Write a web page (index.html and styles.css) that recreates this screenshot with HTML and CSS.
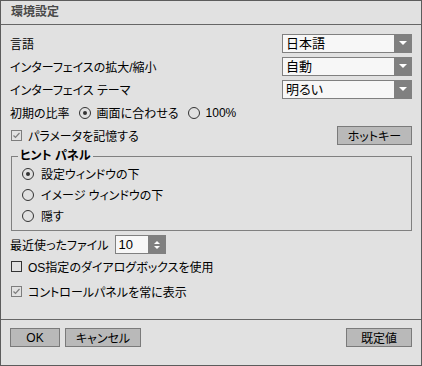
FILE: index.html
```html
<!DOCTYPE html>
<html lang="ja">
<head>
    <meta charset="UTF-8">
    <title>環境設定</title>
    <link rel="stylesheet" href="styles.css">
</head>
<body>
    <div class="window">
        <div class="titlebar">環境設定</div>

        <div class="content">
            <div class="row">
                <span>言語</span>
                <div class="select">
                    <span class="select-value">日本語</span>
                    <span class="select-arrow"><svg width="8" height="5" viewBox="0 0 8 5"><polygon points="0,0 8,0 4,4" fill="#fff"/></svg></span>
                </div>
            </div>

            <div class="row">
                <span>インターフェイスの拡大/縮小</span>
                <div class="select">
                    <span class="select-value">自動</span>
                    <span class="select-arrow"><svg width="8" height="5" viewBox="0 0 8 5"><polygon points="0,0 8,0 4,4" fill="#fff"/></svg></span>
                </div>
            </div>

            <div class="row">
                <span>インターフェイス テーマ</span>
                <div class="select">
                    <span class="select-value">明るい</span>
                    <span class="select-arrow"><svg width="8" height="5" viewBox="0 0 8 5"><polygon points="0,0 8,0 4,4" fill="#fff"/></svg></span>
                </div>
            </div>

            <div class="row ratio">
                <span>初期の比率</span>
                <span class="radio checked"></span>
                <span>画面に合わせる</span>
                <span class="radio"></span>
                <span>100%</span>
            </div>

            <div class="row">
                <span class="check">
                    <span class="box checked"><svg width="9" height="9" viewBox="0 0 9 9"><polyline points="1.5,4.5 3.5,6.5 7.5,2" fill="none" stroke="#7d7d7d" stroke-width="1.2"/></svg></span>
                    パラメータを記憶する
                </span>
                <span class="btn hotkey">ホットキー</span>
            </div>

            <fieldset class="hint">
                <legend>ヒント パネル</legend>
                <div class="opt"><span class="radio checked"></span>設定ウィンドウの下</div>
                <div class="opt"><span class="radio"></span>イメージ ウィンドウの下</div>
                <div class="opt"><span class="radio"></span>隠す</div>
            </fieldset>

            <div class="row recent">
                <span>最近使ったファイル</span>
                <div class="spin">
                    <span class="spin-value">10</span>
                    <span class="spin-arrows"><svg width="6" height="10" viewBox="0 0 6 10"><polygon points="0,4 6,4 3,1" fill="#fff"/><polygon points="0,6 6,6 3,9" fill="#fff"/></svg></span>
                </div>
            </div>

            <div class="row os">
                <span class="check"><span class="box"></span>OS指定のダイアログボックスを使用</span>
            </div>

            <div class="row panel">
                <span class="check">
                    <span class="box checked"><svg width="9" height="9" viewBox="0 0 9 9"><polyline points="1.5,4.5 3.5,6.5 7.5,2" fill="none" stroke="#7d7d7d" stroke-width="1.2"/></svg></span>
                    コントロールパネルを常に表示
                </span>
            </div>
        </div>

        <div class="footer">
            <span class="btn ok">OK</span>
            <span class="btn cancel">キャンセル</span>
            <span class="btn default">既定値</span>
        </div>
    </div>
</body>
</html>
```

FILE: styles.css
```css
body {
    margin: 0;
    font-family: "Liberation Sans", "Noto Sans CJK JP", sans-serif;
    font-size: 12px;
    color: #000;
    background: #e1e1e1;
}

.window {
    width: 422px;
    height: 366px;
    box-sizing: border-box;
    border: 1px solid #5c5c5c;
    background: #e1e1e1;
    display: flex;
    flex-direction: column;
    font-feature-settings: "palt" 1;
}

.titlebar {
    height: 23px;
    line-height: 23px;
    padding-left: 10px;
    border-bottom: 1px solid #666;
    font-weight: bold;
    font-size: 12px;
    color: #4a4a4a;
}

.content {
    flex: 1;
    padding: 9px 9px 0 9px;
}

.row {
    display: flex;
    align-items: center;
    justify-content: space-between;
    height: 19px;
    margin-bottom: 4px;
}

/* selects */
.select {
    width: 130px;
    height: 19px;
    box-sizing: border-box;
    border: 1px solid #808080;
    background: #f7f7f7;
    display: flex;
}

.select-value {
    flex: 1;
    line-height: 17px;
    padding-left: 3px;
    font-size: 13px;
}

.select-arrow {
    width: 18px;
    margin: -1px -1px -1px 0;
    background: #808080;
    display: flex;
    align-items: center;
    justify-content: center;
}

/* radios */
.ratio {
    justify-content: flex-start;
    gap: 6px;
}

.radio {
    width: 12px;
    height: 12px;
    box-sizing: border-box;
    border: 1px solid #333;
    border-radius: 50%;
    display: inline-flex;
    align-items: center;
    justify-content: center;
    flex-shrink: 0;
}

.radio.checked::after {
    content: "";
    width: 4px;
    height: 4px;
    border-radius: 50%;
    background: #333;
}

.ratio .radio {
    margin-left: 3px;
}

/* checkboxes */
.check {
    display: flex;
    align-items: center;
    gap: 6px;
}

.box {
    width: 11px;
    height: 11px;
    box-sizing: border-box;
    border: 1px solid #333;
    display: inline-flex;
    align-items: center;
    justify-content: center;
    margin-left: 1px;
}

.box.checked {
    border-color: #7d7d7d;
}

/* buttons */
.btn {
    height: 19px;
    box-sizing: border-box;
    border: 1px solid #7a7a7a;
    background: #b9b9b9;
    display: inline-flex;
    align-items: center;
    justify-content: center;
}

.hotkey {
    width: 75px;
}

/* hint panel */
.hint {
    margin: 2px 0 0 1px;
    padding: 0 6px 4px 6px;
    border: 1px solid #808080;
}

.hint legend {
    padding: 0 2px;
    font-weight: bold;
    line-height: 14px;
}

.opt {
    height: 21px;
    display: flex;
    align-items: center;
    gap: 7px;
    margin-left: 4px;
}

/* spinner */
.recent {
    justify-content: flex-start;
    gap: 6px;
    margin-top: 4px;
    margin-bottom: 3px;
}

.spin {
    width: 51px;
    height: 19px;
    box-sizing: border-box;
    border: 1px solid #808080;
    background: #f7f7f7;
    display: flex;
}

.spin-value {
    flex: 1;
    line-height: 17px;
    padding-left: 3px;
    font-size: 13px;
}

.spin-arrows {
    width: 18px;
    margin: -1px -1px -1px 0;
    background: #808080;
    display: flex;
    align-items: center;
    justify-content: center;
}

.os {
    justify-content: flex-start;
    margin-bottom: 6px;
}

.panel {
    justify-content: flex-start;
}

/* footer */
.footer {
    height: 37px;
    border-top: 1px solid #666;
    padding: 8px 9px 0 9px;
    display: flex;
    gap: 5px;
}

.ok {
    width: 50px;
}

.cancel {
    width: 76px;
}

.default {
    width: 66px;
    margin-left: auto;
}
```
